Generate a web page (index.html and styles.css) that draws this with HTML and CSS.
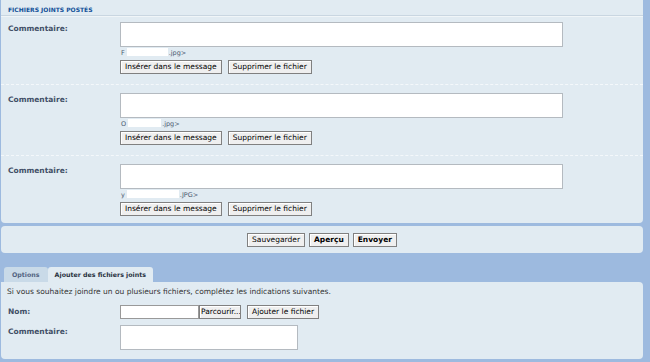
FILE: index.html
```html
<!DOCTYPE html>
<html lang="fr">
<head>
    <meta charset="UTF-8">
    <title>Fichiers joints</title>
    <link rel="stylesheet" href="styles.css">
</head>
<body>
    <div class="panel attachments">
        <h3 class="panel-title">Fichiers joints postés</h3>
        <div class="att-row">
            <div class="att-label">Commentaire:</div>
            <div class="att-field">
                <textarea class="comment"></textarea>
                <div class="filename">F<span class="hidden-name w41"></span>.jpg&gt;</div>
                <div class="btns">
                    <button class="btn">Insérer dans le message</button>
                    <button class="btn">Supprimer le fichier</button>
                </div>
            </div>
        </div>
        <div class="att-row">
            <div class="att-label">Commentaire:</div>
            <div class="att-field">
                <textarea class="comment"></textarea>
                <div class="filename">O<span class="hidden-name w33"></span>.jpg&gt;</div>
                <div class="btns">
                    <button class="btn">Insérer dans le message</button>
                    <button class="btn">Supprimer le fichier</button>
                </div>
            </div>
        </div>
        <div class="att-row">
            <div class="att-label">Commentaire:</div>
            <div class="att-field">
                <textarea class="comment"></textarea>
                <div class="filename">y<span class="hidden-name w52"></span>.JPG&gt;</div>
                <div class="btns">
                    <button class="btn">Insérer dans le message</button>
                    <button class="btn">Supprimer le fichier</button>
                </div>
            </div>
        </div>
    </div>

    <div class="panel submit-bar">
        <button class="btn">Sauvegarder</button>
        <button class="btn bold">Aperçu</button>
        <button class="btn bold">Envoyer</button>
    </div>

    <ul class="tabs">
        <li class="tab">Options</li>
        <li class="tab active">Ajouter des fichiers joints</li>
    </ul>
    <div class="panel upload">
        <p class="hint">Si vous souhaitez joindre un ou plusieurs fichiers, complétez les indications suivantes.</p>
        <div class="up-row">
            <div class="att-label">Nom:</div>
            <div class="up-field">
                <span class="file-box"></span><button class="btn browse">Parcourir...</button>
                <button class="btn">Ajouter le fichier</button>
            </div>
        </div>
        <div class="up-row">
            <div class="att-label">Commentaire:</div>
            <div class="up-field">
                <textarea class="comment small"></textarea>
            </div>
        </div>
    </div>
</body>
</html>
```

FILE: styles.css
```css
body {
    margin: 0;
    background: #9dbadf;
    font-family: "DejaVu Sans", Verdana, sans-serif;
    font-size: 7.5px;
    color: #333;
}
.panel {
    background: #e1ebf2;
    border-radius: 4px;
    margin: 0 7px 0 1px;
}
.attachments {
    height: 223px;
    border-top-left-radius: 0;
    border-top-right-radius: 0;
}
.panel-title {
    margin: 0;
    padding: 6px 6px 2px 7px;
    font-size: 6px;
    text-transform: uppercase;
    color: #115098;
    border-bottom: 1px solid #c9d6e1;
    box-shadow: 0 1px 0 #f0f5f8;
}
.att-row {
    display: flex;
    padding: 6px 0 10px;
    border-bottom: 1px dashed #f4f8fb;
}
.att-row + .att-row {
    padding-top: 8px;
}
.att-row:last-child {
    border-bottom: none;
    padding-bottom: 0;
}
.att-label {
    width: 112px;
    padding-left: 7px;
    padding-top: 2px;
    font-weight: bold;
    color: #425067;
}
.att-field {
    display: flex;
    flex-direction: column;
}
.comment {
    display: block;
    width: 443px;
    height: 25px;
    box-sizing: border-box;
    border: 1px solid #b4bac0;
    background: #fff;
    resize: none;
    margin: 0;
}
.comment.small {
    width: 178px;
}
.filename {
    height: 13px;
    line-height: 13px;
    font-size: 6.5px;
    color: #4a5a70;
    padding-left: 1px;
}
.hidden-name {
    display: inline-block;
    height: 8px;
    vertical-align: -1px;
    background: #fff;
    margin: 0 1px 0 2px;
}
.w41 { width: 41px; }
.w33 { width: 33px; }
.w52 { width: 52px; }
.btns {
    display: flex;
    gap: 6px;
}
.btn {
    height: 14px;
    padding: 0 4px;
    font-family: "DejaVu Sans", Verdana, sans-serif;
    font-size: 7.5px;
    color: #000;
    background: #efefef;
    border: 1px solid #808080;
    box-shadow: inset 1px 1px 0 #fff;
    line-height: 12px;
}
.btn.bold {
    font-weight: bold;
}
.submit-bar {
    margin-top: 3px;
    height: 27px;
    display: flex;
    align-items: center;
    justify-content: center;
    gap: 4px;
    box-sizing: border-box;
}
.tabs {
    list-style: none;
    margin: 14px 0 0 4px;
    padding: 0;
    display: flex;
}
.tab {
    height: 15px;
    line-height: 15px;
    padding: 0 8px;
    font-size: 6.3px;
    font-weight: bold;
    color: #536482;
    background: #c9dae8;
    border-top-left-radius: 3px;
    border-top-right-radius: 3px;
}
.tab.active {
    color: #28313f;
    background: #e1ebf2;
    padding: 0 7px;
}
.upload {
    height: 77px;
    border-top-left-radius: 0;
}
.hint {
    margin: 0;
    padding: 5px 6px 0;
    line-height: 10px;
}
.up-row {
    display: flex;
    margin-top: 8px;
}
.up-row + .up-row {
    margin-top: 6px;
}
.up-field {
    display: flex;
    gap: 6px;
}
.file-box {
    display: inline-block;
    width: 79px;
    height: 14px;
    box-sizing: border-box;
    background: #fff;
    border: 1px solid #999;
    vertical-align: top;
}
.browse {
    margin-left: -6px;
    width: 42px;
    padding: 0 1px;
    overflow: hidden;
    white-space: nowrap;
}
```
